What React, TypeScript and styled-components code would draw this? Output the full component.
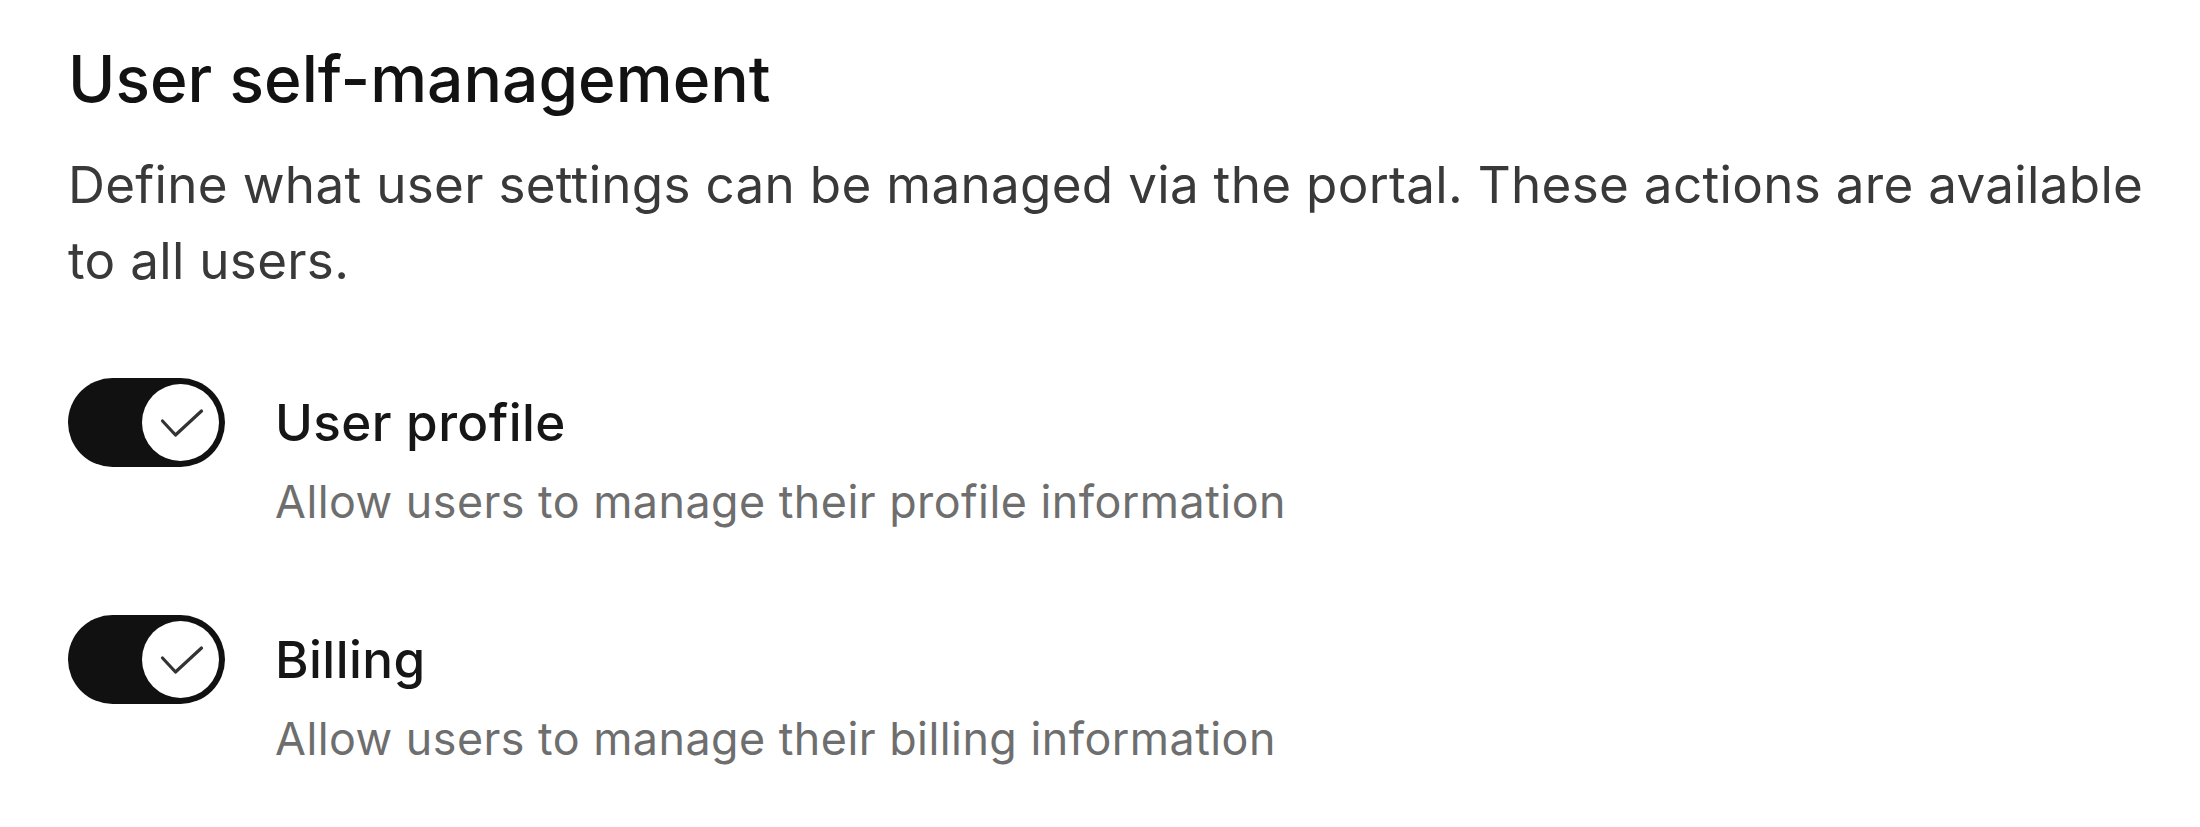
import React from "react";
import styled, { createGlobalStyle } from "styled-components";

const GlobalStyle = createGlobalStyle`
  html, body {
    margin: 0;
    padding: 0;
    background: #ffffff;
  }
  body {
    font-family: Inter, "Noto Sans", "Liberation Sans", sans-serif;
    -webkit-font-smoothing: antialiased;
  }
`;

const Page = styled.main`
  box-sizing: border-box;
  width: 2200px;
  padding: 34px 40px 0 68px;
`;

const Title = styled.h2`
  margin: 0;
  font-size: 64px;
  line-height: 89.6px;
  font-weight: 500;
  color: #121212;
  letter-spacing: 0.05px;
`;

const Description = styled.p`
  margin: 22px 0 0 0;
  font-size: 51.2px;
  line-height: 76.8px;
  font-weight: 400;
  color: #393939;
  letter-spacing: 0.29px;
`;

const OptionList = styled.div`
  display: flex;
  flex-direction: column;
  gap: 81px;
  margin-top: 79px;
`;

const OptionRow = styled.div`
  display: flex;
  align-items: flex-start;
  gap: 50px;
`;

const Track = styled.button<{ $on: boolean }>`
  box-sizing: border-box;
  flex: none;
  width: 157px;
  height: 89px;
  padding: 6px;
  border: none;
  border-radius: 45px;
  background: ${(p) => (p.$on ? "#111111" : "#d4d4d4")};
  display: flex;
  align-items: center;
  justify-content: ${(p) => (p.$on ? "flex-end" : "flex-start")};
  cursor: pointer;
`;

const Knob = styled.span`
  width: 77px;
  height: 77px;
  border-radius: 50%;
  background: #ffffff;
  display: flex;
  align-items: center;
  justify-content: center;
`;

const OptionText = styled.div`
  display: flex;
  flex-direction: column;
`;

const OptionLabel = styled.span`
  font-size: 51.2px;
  line-height: 89px;
  font-weight: 500;
  color: #161616;
  letter-spacing: 0.42px;
`;

const OptionHint = styled.span`
  margin-top: 3px;
  font-size: 44.8px;
  line-height: 64px;
  font-weight: 400;
  color: #6e6e6e;
  letter-spacing: 0.48px;
`;

const CheckIcon = () => (
  <svg width="77" height="77" viewBox="0 0 77 77" fill="none">
    <polyline
      points="20.5,37 33.5,51 59.5,27"
      stroke="#333333"
      strokeWidth="3.2"
      strokeLinecap="round"
      strokeLinejoin="round"
    />
  </svg>
);

const Toggle = ({ on }: { on: boolean }) => (
  <Track $on={on} role="switch" aria-checked={on}>
    <Knob>{on && <CheckIcon />}</Knob>
  </Track>
);

const options = [
  {
    label: "User profile",
    hint: "Allow users to manage their profile information",
  },
  {
    label: "Billing",
    hint: "Allow users to manage their billing information",
  },
];

export default function App() {
  return (
    <>
      <GlobalStyle />
      <Page>
        <Title>User self-management</Title>
        <Description>
          Define what user settings can be managed via the portal. These
          actions are available to all users.
        </Description>
        <OptionList>
          {options.map((o) => (
            <OptionRow key={o.label}>
              <Toggle on />
              <OptionText>
                <OptionLabel>{o.label}</OptionLabel>
                <OptionHint>{o.hint}</OptionHint>
              </OptionText>
            </OptionRow>
          ))}
        </OptionList>
      </Page>
    </>
  );
}
